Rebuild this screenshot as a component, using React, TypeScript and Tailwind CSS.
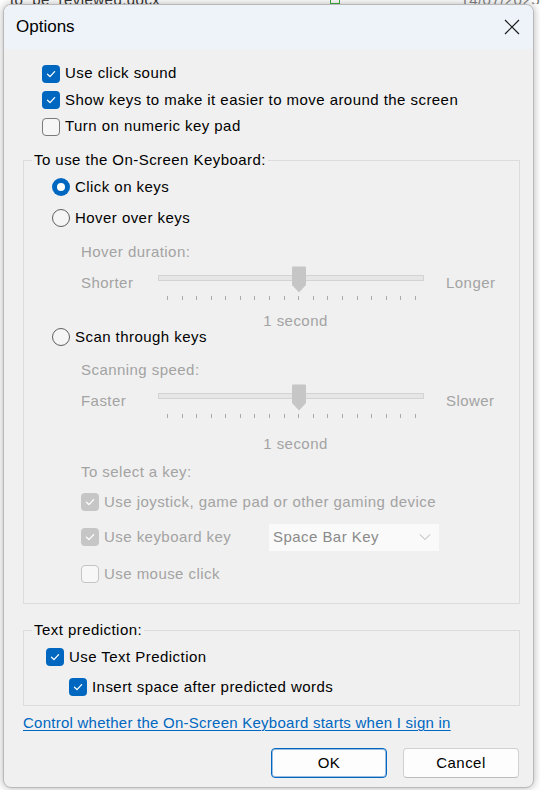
import React from "react";

const CheckMark = ({ color = "white" }: { color?: string }) => (
  <svg width="12" height="12" viewBox="0 0 12 12" fill="none">
    <path d="M2.5 6.2 L5 8.6 L9.6 3.6" stroke={color} strokeWidth="1.3" strokeLinecap="round" strokeLinejoin="round" />
  </svg>
);

const Box = ({ checked, disabled }: { checked?: boolean; disabled?: boolean }) => {
  if (checked) {
    return (
      <span className={`flex h-[18px] w-[18px] shrink-0 items-center justify-center rounded-[4px] ${disabled ? "bg-[#c6c6c6]" : "bg-[#0067c0]"}`}>
        <CheckMark />
      </span>
    );
  }
  return (
    <span className={`h-[18px] w-[18px] shrink-0 rounded-[4px] border ${disabled ? "border-[#c4c4c4] bg-[#f7f7f7]" : "border-[#7a7a7a] bg-[#f6f6f6]"}`} />
  );
};

const Radio = ({ checked }: { checked?: boolean }) =>
  checked ? (
    <span className="flex h-[18px] w-[18px] shrink-0 items-center justify-center rounded-full bg-[#0067c0]">
      <span className="h-[8px] w-[8px] rounded-full bg-white" />
    </span>
  ) : (
    <span className="h-[18px] w-[18px] shrink-0 rounded-full border border-[#5f5f5f] bg-[#f5f5f5]" />
  );

const CheckRow = ({ label, checked, disabled, className = "" }: { label: string; checked?: boolean; disabled?: boolean; className?: string }) => (
  <div className={`flex items-center gap-[5px] ${className}`}>
    <Box checked={checked} disabled={disabled} />
    <span className={disabled ? "text-[#a3a3a3]" : "text-black"}>{label}</span>
  </div>
);

const ticks = Array.from({ length: 18 }, (_, i) => i);

const Slider = ({ left, right }: { left: string; right: string }) => (
  <div className="flex h-[35px] items-start pl-[57px] text-[#a3a3a3]">
    <span className="mt-[7px] w-[77px] leading-[20px]">{left}</span>
    <div className="relative h-[35px] w-[266px]">
      <div className="mt-[9px] h-[6px] w-[266px] border border-[#d3d3d3] bg-[#e6e6e6]" />
      <div className="absolute left-[141px] top-0 -translate-x-1/2">
        <svg width="15" height="27" viewBox="0 0 15 27">
          <path d="M1.5 0.5 H13.5 Q14.5 0.5 14.5 1.5 V19 L7.5 26.5 L0.5 19 V1.5 Q0.5 0.5 1.5 0.5 Z" fill="#c6c6c6" />
        </svg>
      </div>
      <div className="absolute left-[9px] top-[30px] flex w-[249px] justify-between">
        {ticks.map((t) => (
          <span key={t} className="h-[4px] w-px bg-[#a9a9a9]" />
        ))}
      </div>
    </div>
    <span className="ml-[22px] mt-[7px] leading-[20px]">{right}</span>
  </div>
);

export default function App() {
  return (
    <div className="min-h-[790px] w-[540px] overflow-hidden bg-white font-['Liberation_Sans',Arial,sans-serif] text-[15px] tracking-[0.45px]">
      <div className="flex h-[4px] items-end overflow-hidden text-[15px] text-[#333]">
        <span className="ml-[10px] leading-[8px]">- to_be_reviewed.docx</span>
        <span className="ml-[170px] h-[8px] w-[14px] border border-[#3a9a3a]" />
        <span className="ml-[120px] leading-[8px] text-[#777]">14/07/2025</span>
      </div>
      <div className="ml-[3px] flex h-[784px] w-[531px] flex-col overflow-hidden rounded-[8px] border border-[#b9b9b9] bg-[#f0f0f0] shadow-[0_0_8px_rgba(0,0,0,0.3)]">
        <div className="flex h-[44px] shrink-0 items-center justify-between bg-[#eef2f9] pl-[12px] pr-[12px]">
          <span className="text-[17px] tracking-normal text-black">Options</span>
          <svg width="16" height="16" viewBox="0 0 16 16" className="mr-[1px]">
            <path d="M1 1 L15 15 M15 1 L1 15" stroke="#1a1a1a" strokeWidth="1.2" />
          </svg>
        </div>

        <div className="flex flex-col pt-[11px]">
          <div className="pl-[38px]">
            <CheckRow label="Use click sound" checked className="h-[27px]" />
            <CheckRow label="Show keys to make it easier to move around the screen" checked className="h-[26px]" />
            <CheckRow label="Turn on numeric key pad" className="h-[27px]" />
          </div>

          <fieldset className="ml-[19px] mt-[10px] w-[497px] min-w-0 border border-[#dcdcdc] pb-[17px]">
            <legend className="ml-[8px] px-[2px] leading-[20px] text-black">To use the On-Screen Keyboard:</legend>
            <div className="flex flex-col pl-[28px]">
              <div className="mt-[5px] flex h-[24px] items-center gap-[5px]">
                <Radio checked />
                <span>Click on keys</span>
              </div>
              <div className="mt-[7px] flex h-[24px] items-center gap-[5px]">
                <Radio />
                <span>Hover over keys</span>
              </div>
            </div>
            <div className="mt-[12px] pl-[57px] leading-[20px] text-[#a3a3a3]">Hover duration:</div>
            <div className="mt-[4px]">
              <Slider left="Shorter" right="Longer" />
            </div>
            <div className="mt-[13px] pl-[48px] text-center leading-[14px] text-[#a3a3a3]">1 second</div>
            <div className="flex h-[18px] items-center gap-[5px] pl-[28px]">
              <Radio />
              <span>Scan through keys</span>
            </div>
            <div className="mt-[14px] pl-[57px] leading-[20px] text-[#a3a3a3]">Scanning speed:</div>
            <div className="mt-[4px]">
              <Slider left="Faster" right="Slower" />
            </div>
            <div className="mt-[17px] pl-[48px] text-center leading-[16px] text-[#a3a3a3]">1 second</div>
            <div className="mt-[10px] pl-[57px] leading-[20px] text-[#a3a3a3]">To select a key:</div>
            <div className="flex flex-col pl-[57px]">
              <CheckRow label="Use joystick, game pad or other gaming device" checked disabled className="mt-[8px] h-[24px]" />
              <div className="mt-[9px] flex h-[28px] items-center">
                <CheckRow label="Use keyboard key" checked disabled className="w-[188px]" />
                <div className="flex h-[27px] w-[170px] items-center justify-between bg-[#fafafa] pl-[4px] pr-[8px] text-[#8a8a8a]">
                  <span>Space Bar Key</span>
                  <svg width="12" height="8" viewBox="0 0 12 8">
                    <path d="M1 1.5 L6 6.5 L11 1.5" stroke="#b0b0b0" strokeWidth="1" fill="none" />
                  </svg>
                </div>
              </div>
              <CheckRow label="Use mouse click" disabled className="mt-[11px] h-[24px]" />
            </div>
          </fieldset>

          <fieldset className="ml-[19px] mt-[16px] w-[497px] min-w-0 border border-[#dcdcdc] pb-[6px]">
            <legend className="ml-[8px] px-[2px] leading-[20px] text-black">Text prediction:</legend>
            <div className="flex flex-col">
              <CheckRow label="Use Text Prediction" checked className="ml-[22px] mt-[5px] h-[24px]" />
              <CheckRow label="Insert space after predicted words" checked className="ml-[45px] mt-[6px] h-[24px]" />
            </div>
          </fieldset>

          <div className="ml-[19px] mt-[7px] leading-[20px] tracking-[0.25px]">
            <span className="text-[#0067c0] underline decoration-1 underline-offset-2">Control whether the On-Screen Keyboard starts when I sign in</span>
          </div>

          <div className="mr-[14px] mt-[15px] flex justify-end gap-[16px]">
            <button className="h-[30px] w-[116px] rounded-[4px] border border-[#0067c0] bg-[#fdfdfd] text-black shadow-[inset_0_0_0_1px_#9dbde0]">OK</button>
            <button className="h-[30px] w-[116px] rounded-[4px] border border-[#d1d1d1] border-b-[#bdbdbd] bg-[#fdfdfd] text-black">Cancel</button>
          </div>
        </div>
      </div>
    </div>
  );
}
